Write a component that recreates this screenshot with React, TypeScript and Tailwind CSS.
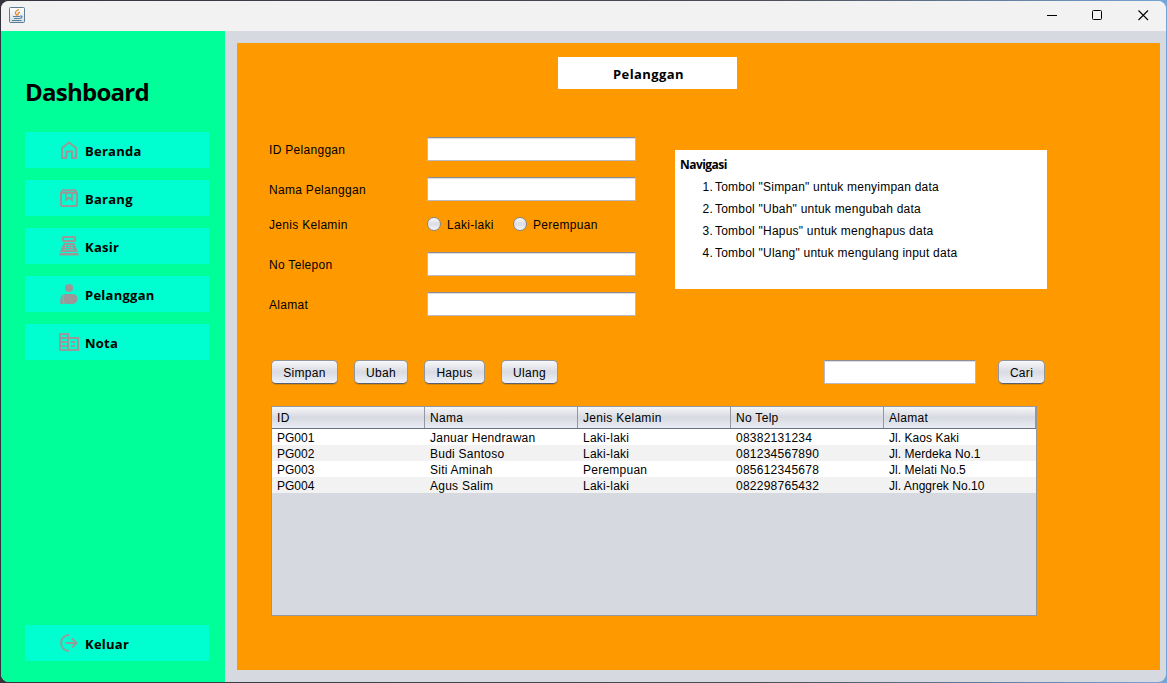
import type { ReactNode } from 'react';

function Glyph({ children }: { children: ReactNode }) {
  return (
    <svg className="mb-0.5 h-5 w-5 shrink-0 overflow-visible text-[#999999]" viewBox="0 0 20 20" fill="none" stroke="currentColor" strokeWidth="2">
      {children}
    </svg>
  );
}

const HomeIcon = () => (
  <Glyph>
    <path d="M3 8 10 2.500l7 5.500V18h-4v-6.500H7.500V18H3z" />
  </Glyph>
);

const BoxIcon = () => (
  <Glyph>
    <path d="M2 5V17L3 18H17L18 17V5L16.200 2.200H3.800z" />
    <path d="M2 4.800h16" strokeWidth="2" />
    <path d="M7 5v7.200l3-2.500 3 2.500V5" strokeWidth="1.700" />
  </Glyph>
);

const RegisterIcon = () => (
  <Glyph>
    <rect x="4" y="1" width="12" height="4" rx="0.800" />
    <path d="M5.500 7h9c.8 0 1 .3 1.200 1L19 16H1L4.300 8c.2-.7.4-1 1.200-1z" fill="currentColor" stroke="none" />
    <path d="M0.500 17h19v2.500h-19z" fill="currentColor" stroke="none" />
    <path d="M6 9.500h8M6 11.500h8M6 13.500h8" stroke="#00ffd0" strokeWidth="1" strokeDasharray="2 1" />
  </Glyph>
);

const PersonIcon = () => (
  <Glyph>
    <circle cx="10" cy="4" r="4.100" fill="currentColor" stroke="none" />
    <path d="M1.300 20v-4.500C1.300 12.500 3 10.300 6 10h8c2.500 0 4.500 1.800 4.500 4.600 0 3.200-2 5.400-4.500 5.400z" fill="currentColor" stroke="none" />
    <path d="M5.200 10.500c-1.700 2.500-1.700 6 .2 9.500" stroke="#00ffd0" strokeWidth="0.700" />
  </Glyph>
);

const BuildingIcon = () => (
  <Glyph>
    <path
      transform="translate(-2 -2)"
      fill="currentColor"
      stroke="none"
      d="M12 7V3H2v18h20V7H12zM10 19H4v-2h6v2zm0-4H4v-2h6v2zm0-4H4V9h6v2zm0-4H4V5h6v2zm10 12h-8v-2h0v-2h0v-2h0v-2h0V9h8v10zm-2-8h-4v2h4v-2zm0 4h-4v2h4v-2z"
    />
  </Glyph>
);

const ExitIcon = () => (
  <Glyph>
    <path d="M10 2a8 8 0 1 0 0 16M6.500 10h11M13 5.500 17.500 10 13 14.500" strokeWidth="1.900" />
  </Glyph>
);

function MenuItem({ label, icon }: { label: string; icon: ReactNode }) {
  return (
    <button className="flex h-9 w-[184px] shrink-0 items-center gap-1.5 bg-[#00ffd0] pl-[34px] pt-0.5 font-['Open_Sans',sans-serif] text-[13px] font-bold leading-none tracking-[0.25px] text-black">
      {icon}
      {label}
    </button>
  );
}

const menu = [
  { label: 'Beranda', icon: <HomeIcon /> },
  { label: 'Barang', icon: <BoxIcon /> },
  { label: 'Kasir', icon: <RegisterIcon /> },
  { label: 'Pelanggan', icon: <PersonIcon /> },
  { label: 'Nota', icon: <BuildingIcon /> },
];

function Field({ label }: { label: string }) {
  return (
    <label className="flex h-6 items-center">
      <span className="w-[158px] pt-0.5">{label}</span>
      <input className="h-6 w-[209px] border border-[#b9bbc2] border-t-[#8d8f96] bg-white px-1.5 shadow-[inset_0_1px_0_#dcdcdf] outline-none" />
    </label>
  );
}

function Radio({ label }: { label: string }) {
  return (
    <label className="flex items-center gap-1.5">
      <span className="h-3.5 w-3.5 rounded-full border border-[#85868b] bg-linear-to-b from-[#f8f8fa] via-[#dcdee4] to-[#f4f5fa]" />
      <span className="pt-0.5">{label}</span>
    </label>
  );
}

function Button({ label, size }: { label: string; size: string }) {
  return (
    <button
      className={`${size} h-6 rounded-[5px] border border-[#92959e] border-b-[#5b6070] bg-linear-to-b from-[#f7f8fa] via-[#d9dbe2] to-[#eff1f8] pt-0.5 text-[12px] leading-none tracking-[0.3px] shadow-[0_1px_0_#d98706]`}
    >
      {label}
    </button>
  );
}

const columns = ['ID', 'Nama', 'Jenis Kelamin', 'No Telp', 'Alamat'];
const rows = [
  ['PG001', 'Januar Hendrawan', 'Laki-laki', '08382131234', 'Jl. Kaos Kaki'],
  ['PG002', 'Budi Santoso', 'Laki-laki', '081234567890', 'Jl. Merdeka No.1'],
  ['PG003', 'Siti Aminah', 'Perempuan', '085612345678', 'Jl. Melati No.5'],
  ['PG004', 'Agus Salim', 'Laki-laki', '082298765432', 'Jl. Anggrek No.10'],
];

const steps = [
  'Tombol "Simpan" untuk menyimpan data',
  'Tombol "Ubah" untuk mengubah data',
  'Tombol "Hapus" untuk menghapus data',
  'Tombol "Ulang" untuk mengulang input data',
];

function JavaIcon() {
  return (
    <svg className="h-4 w-4" viewBox="0 0 16 16" fill="none">
      <defs>
        <linearGradient id="tile" x1="0" y1="0" x2="0" y2="1">
          <stop offset="0" stopColor="#ffffff" />
          <stop offset="1" stopColor="#d7dde3" />
        </linearGradient>
      </defs>
      <rect x="0.500" y="0.500" width="15" height="15" rx="1" fill="url(#tile)" stroke="#5d7d94" />
      <path d="M10 2.500C5.500 4.500 5.500 6 8 8.500M11 5C8.500 6 8.500 7 9 8.500" stroke="#e5862b" strokeWidth="1.200" />
      <path d="M4 9.500h7M5 11.500h5.500M3 13.500h9.500M11 9c3-.5 2.500 2-.3 2.500" stroke="#5382a1" strokeWidth="1.100" />
    </svg>
  );
}

export default function App() {
  return (
    <div className="h-[683px] w-[1167px] overflow-hidden bg-linear-to-r from-[#34343c] from-0% via-[#4c4d55] via-65% to-[#75a5d8] to-100% p-px font-['Liberation_Sans',sans-serif] text-[12px] leading-none text-black">
      <div className="flex h-[681px] w-[1165px] flex-col overflow-hidden rounded-lg bg-[#d6d9e0]">
        <header className="flex h-[30px] shrink-0 items-center justify-between bg-[#f2f2f2] pb-0.5 pl-2">
          <JavaIcon />
          <svg className="mr-4 h-3 w-[103px]" viewBox="0 0 103 12" fill="none" stroke="#000">
            <path d="M0 6.500h10" shapeRendering="crispEdges" />
            <rect x="45.500" y="1.500" width="9" height="9" rx="1" />
            <path d="m91.500 1.500 9.500 9.500m0-9.500-9.500 9.500" strokeWidth="1.100" />
          </svg>
        </header>
        <div className="flex min-h-0 flex-1">
          <aside className="flex w-56 shrink-0 flex-col bg-[#00ff99] pb-[21px] pl-6 pt-[49px]">
            <h1 className="h-[52px] font-['Open_Sans',sans-serif] text-[24px] font-bold leading-[24px] tracking-[-0.75px]">Dashboard</h1>
            <nav className="flex flex-col gap-3">
              {menu.map((m) => (
                <MenuItem key={m.label} label={m.label} icon={m.icon} />
              ))}
            </nav>
            <div className="mt-auto">
              <MenuItem label="Keluar" icon={<ExitIcon />} />
            </div>
          </aside>
          <main className="mb-3 ml-3 mr-1.5 mt-3 min-w-0 flex-1 bg-[#ff9900] pt-3.5">
            <h2 className="ml-[321px] flex h-8 w-[179px] items-center justify-center bg-white pl-0.5 pt-0.5 font-['Open_Sans',sans-serif] text-[13px] font-bold tracking-[0.4px]">
              Pelanggan
            </h2>
            <div className="mt-12 flex pl-8">
              <form className="flex w-[406px] flex-col tracking-[0.3px]">
                <Field label="ID Pelanggan" />
                <div className="mt-4">
                  <Field label="Nama Pelanggan" />
                </div>
                <div className="mt-4 flex h-3.5 items-center">
                  <span className="w-[158px] pt-0.5">Jenis Kelamin</span>
                  <div className="w-[86px]">
                    <Radio label="Laki-laki" />
                  </div>
                  <Radio label="Perempuan" />
                </div>
                <div className="mt-[21px]">
                  <Field label="No Telepon" />
                </div>
                <div className="mt-4">
                  <Field label="Alamat" />
                </div>
              </form>
              <section className="mt-[13px] h-[139px] w-[372px] bg-white pl-[5px] pt-[9px]">
                <h3 className="font-['Open_Sans',sans-serif] text-[12px] font-bold leading-3 tracking-[-0.55px]">Navigasi</h3>
                <ol className="mt-[5px] tracking-[0.22px]">
                  {steps.map((s, i) => (
                    <li key={s} className="flex h-[22px] items-center">
                      <span className="w-[35px] pr-0.5 text-right">{i + 1}.</span>
                      {s}
                    </li>
                  ))}
                </ol>
              </section>
            </div>
            <div className="ml-[34px] mt-11 flex w-[774px] items-center">
              <div className="flex gap-4">
                <Button label="Simpan" size="w-[67px]" />
                <Button label="Ubah" size="w-[54px]" />
                <Button label="Hapus" size="w-[61px]" />
                <Button label="Ulang" size="w-[57px]" />
              </div>
              <input className="ml-auto mr-[22px] h-6 w-[152px] border border-[#b9bbc2] border-t-[#8d8f96] bg-white px-1.5 shadow-[inset_0_1px_0_#dcdcdf] outline-none" />
              <Button label="Cari" size="w-[47px]" />
            </div>
            <div className="ml-[34px] mt-[22px] h-[210px] w-[766px] border border-[#9297a1] bg-[#d6d9e0]">
              <div className="grid h-[22px] grid-cols-[153px_153px_153px_153px_152px] border-b border-[#6b7282] bg-linear-to-b from-[#f5f6f8] via-[#d8dae1] to-[#eaecf3] tracking-[0.3px]">
                {columns.map((c) => (
                  <div key={c} className="flex items-center border-r border-[#9297a1] pl-[5px]">
                    {c}
                  </div>
                ))}
              </div>
              {rows.map((r) => (
                <div key={r[0]} className="grid h-4 grid-cols-[153px_153px_153px_153px_152px] tracking-[0.25px] even:bg-white odd:bg-[#f2f2f2]">
                  {r.map((v) => (
                    <div key={v} className="flex items-center pl-[5px] pt-0.5 first:tracking-[0px] last:tracking-[0.05px]">
                      {v}
                    </div>
                  ))}
                </div>
              ))}
            </div>
          </main>
        </div>
      </div>
    </div>
  );
}
